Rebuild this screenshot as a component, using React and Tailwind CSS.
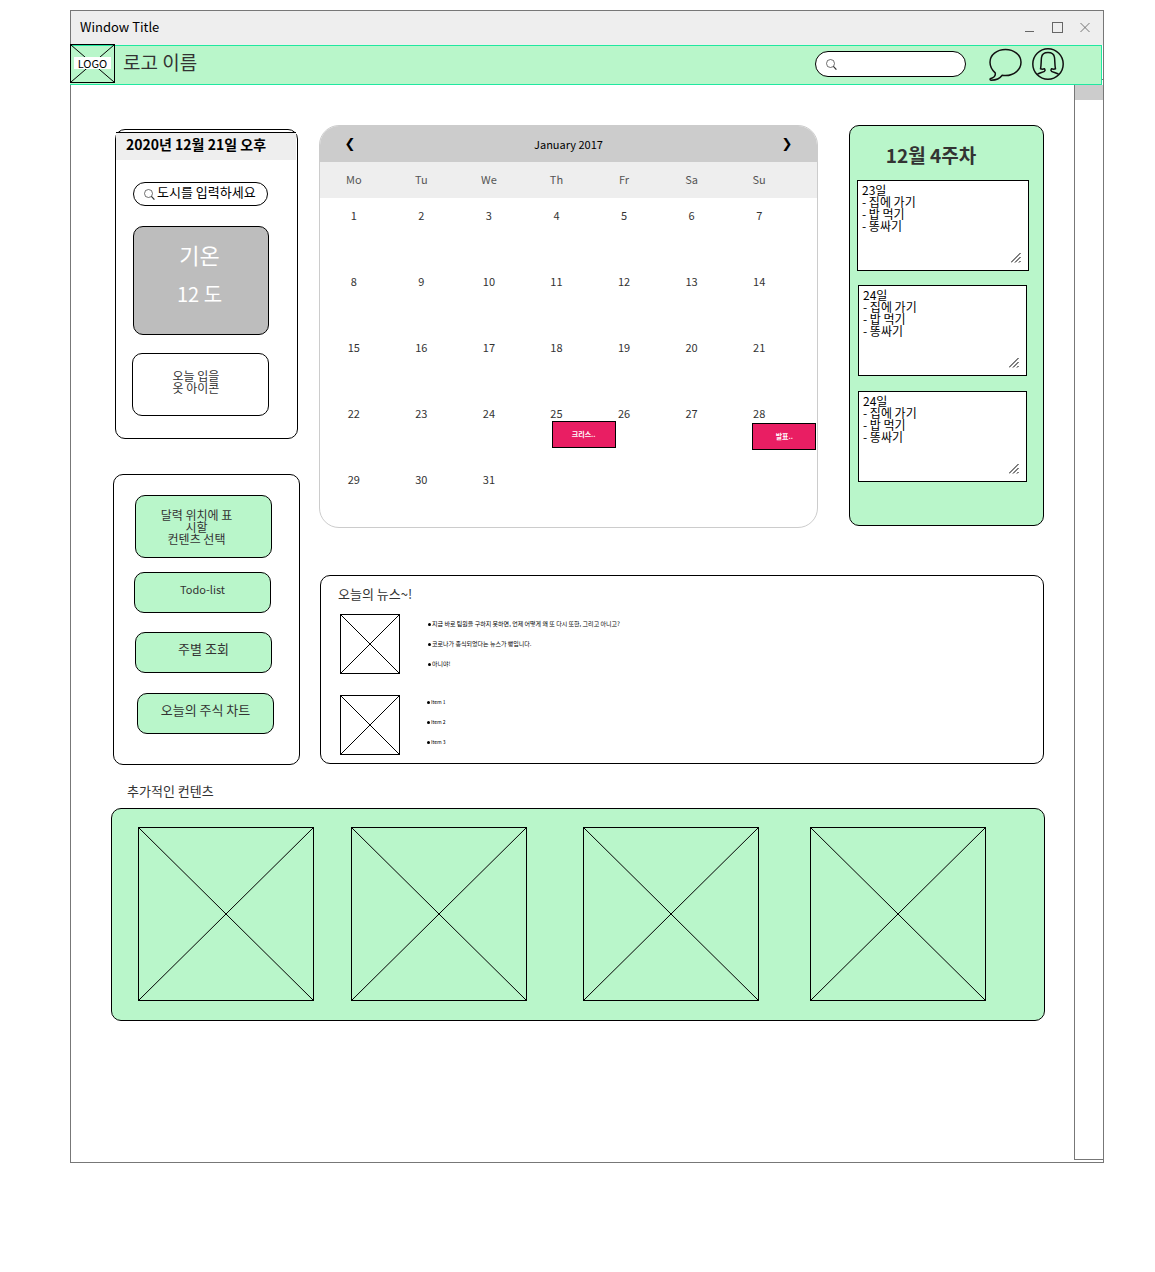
import React from "react";

const weekdays = ["Mo", "Tu", "We", "Th", "Fr", "Sa", "Su"];
const weeks = [0, 1, 2, 3, 4].map((w) =>
  [1, 2, 3, 4, 5, 6, 7].map((d) => (w * 7 + d <= 31 ? w * 7 + d : null))
);
const events = {
  25: { label: "크리스..", place: "left-[29px] top-[25px]" },
  28: { label: "발표..", place: "left-[27px] top-[27px]" },
};
const menu = [
  { text: "달력 위치에 표\n시할\n컨텐츠 선택", box: "ml-[21px] h-[63px] pr-[14px] text-[12px]" },
  { text: "Todo-list", box: "ml-[20px] mt-[14px] h-[41px] pb-2 text-[11px]" },
  { text: "주별 조회", box: "ml-[21px] mt-[19px] h-[41px] pb-2 text-[13px]" },
  { text: "오늘의 주식 차트", box: "ml-[23px] mt-[20px] h-[41px] pb-2 text-[13px]" },
];
const notes = [
  { id: "note-1", day: "23일", box: "ml-[7px] mr-[14px]" },
  { id: "note-2", day: "24일", box: "ml-[8px] mr-[16px] mt-[14px]" },
  { id: "note-3", day: "24일", box: "ml-[8px] mr-[16px] mt-[15px]" },
];
const news = [
  {
    box: "mt-[10px]",
    list: "ml-[28px] text-[6px]",
    items: [
      "지금 바로 팀원을 구하지 못하면, 언제 어떻게 왜 또 다시 또한, 그리고 아니고?",
      "코로나가 종식되었다는 뉴스가 뻥입니다.",
      "아니야!",
    ],
  },
  { box: "mt-[21px]", list: "ml-[27px] -mt-[3px] text-[5px]", items: ["Item 1", "Item 2", "Item 3"] },
];

function Placeholder({ className }) {
  return (
    <div className={"shrink-0 border border-black " + className}>
      <svg className="block h-full w-full" stroke="#000" aria-hidden="true">
        <line x1="0" y1="0" x2="100%" y2="100%" />
        <line x1="100%" y1="0" x2="0" y2="100%" />
      </svg>
    </div>
  );
}

function Magnifier() {
  return (
    <svg className="h-[11px] w-[11px] shrink-0" viewBox="0 0 11 11" fill="none" stroke="#333" aria-hidden="true">
      <circle cx="4.5" cy="4.5" r="4" strokeWidth="0.7" />
      <path d="M7.4 7.4 10.4 10.6" strokeWidth="1.2" />
    </svg>
  );
}

function TitleBar() {
  return (
    <div className="flex h-[34px] items-center justify-between bg-[#eee] pb-[2px] pl-[9px] pr-[13px]">
      <span className="text-[13px] leading-4 text-black">Window Title</span>
      <div className="flex gap-[17px] text-[#666]">
        <button aria-label="Minimize">
          <svg className="block h-[11px] w-[10px]" viewBox="0 0 10 11" stroke="currentColor" shapeRendering="crispEdges">
            <path d="M0 9.5H9" />
          </svg>
        </button>
        <button aria-label="Maximize">
          <svg className="block h-[11px] w-[11px]" viewBox="0 0 11 11" fill="none" stroke="currentColor">
            <rect x=".5" y=".5" width="10" height="10" />
          </svg>
        </button>
        <button aria-label="Close">
          <svg className="block h-[11px] w-[10px]" viewBox="0 0 10 11" stroke="currentColor" strokeWidth=".9">
            <path d="M.5 1 9.5 10M9.5 1 .5 10" />
          </svg>
        </button>
      </div>
    </div>
  );
}

function Header() {
  return (
    <header className="relative z-10 -ml-px mr-px flex h-10 items-center border border-l-0 border-[#20e8a0] bg-[#b9f6ca] pb-[2px] pr-[37px]">
      <div className="relative -mt-px flex h-[39px] w-[45px] shrink-0 items-center justify-center border border-black pb-[2px]">
        <svg className="absolute inset-0 h-full w-full" stroke="#000" aria-hidden="true">
          <line x1="0" y1="0" x2="100%" y2="100%" />
          <line x1="100%" y1="0" x2="0" y2="100%" />
        </svg>
        <span className="relative bg-white px-1 text-[11px] leading-[12px] text-black">LOGO</span>
      </div>
      <h1 className="ml-[8px] -mt-1 text-[19px] leading-6">로고 이름</h1>
      <label className="ml-auto flex h-[26px] w-[151px] items-center rounded-full border border-black bg-white px-[10px]">
        <Magnifier />
        <input type="text" aria-label="검색" className="ml-1 w-full min-w-0 text-[12px] outline-none" />
      </label>
      <button aria-label="메시지" className="ml-[23px]">
        <svg className="block h-[33px] w-[33px]" viewBox="0 0 33 33" fill="none" stroke="#111" strokeWidth="1.5" strokeLinejoin="round">
          <path d="M16.500 1.500C7.800 1.500 1 7 1 14.300c0 4.400 2.300 8 5.200 10.600.6 2.500-1 4.700-5 5.900-.4.8.1 1.300 1 1.400 5.400 0 8.600-1.600 11-4.900 1 .2 2.100.3 3.300.3C25.300 27.600 32 21.500 32 14.300 32 7 25 1.500 16.500 1.500z" />
        </svg>
      </button>
      <button aria-label="프로필" className="ml-[10px]">
        <svg className="block h-[32px] w-[32px]" viewBox="0 0 32 32" fill="none" stroke="#111" strokeWidth="1.5" strokeLinejoin="round">
          <circle cx="16" cy="16" r="15.200" />
          <path d="M5 26.500c2.500-1.800 5.500-2 7.500-3.200.9-.8.600-1.800 0-2.500-1.200.4-2.600.6-4 0C9.400 17 9 13 9.500 9.500 10 6 12.500 4.600 16 4.600S22 6 22.500 9.500C23 13 22.600 17 23.500 20.800c-1.400.6-2.800.4-4 0-.6.7-.9 1.700 0 2.500 2 1.200 5 1.400 7.500 3.200" />
        </svg>
      </button>
    </header>
  );
}

function Weather() {
  return (
    <section className="mx-[2px] h-[310px] rounded-[10px] border border-black pt-[2px]">
      <h2 className="mr-px h-[28px] whitespace-nowrap border-t border-black bg-[#eee] pl-[10px] text-[14px] font-bold leading-[22px] text-black">
        2020년 12월 21일 오후
      </h2>
      <label className="ml-[17px] mr-[29px] mt-[22px] flex h-[24px] items-center rounded-full border border-black pl-[10px] pr-[6px]">
        <Magnifier />
        <input
          type="text"
          aria-label="도시"
          placeholder="도시를 입력하세요"
          className="-mt-[4px] ml-[2px] w-full min-w-0 text-[13px] leading-4 outline-none placeholder:text-black"
        />
      </label>
      <div className="ml-[17px] mr-[28px] mt-[20px] h-[109px] rounded-[10px] border border-black bg-[#bdbdbd] pr-[3px] pt-[7px] text-center leading-[40px] text-white">
        <p className="text-[22px]">기온</p>
        <p className="text-[20px]">12 도</p>
      </div>
      <p className="ml-[16px] mr-[28px] mt-[18px] h-[63px] whitespace-pre rounded-[10px] border border-black pr-[9px] pt-[16px] text-center text-[12px] leading-[12px]">
        {"오늘 입을\n옷 아이콘"}
      </p>
    </section>
  );
}

function Menu() {
  return (
    <nav className="mt-[35px] h-[291px] rounded-[10px] border border-black pt-[20px]">
      {menu.map((m) => (
        <button
          key={m.text}
          className={
            "flex w-[137px] items-center justify-center whitespace-pre rounded-[10px] border border-black bg-[#b9f6ca] leading-[12px] " +
            m.box
          }
        >
          {m.text}
        </button>
      ))}
    </nav>
  );
}

function Calendar() {
  return (
    <section className="h-[403px] min-w-0 flex-1 overflow-hidden rounded-[20px] border border-[#ccc] text-[11px]">
      <div className="flex h-[36px] items-center justify-between bg-[#ccc] px-[24px] pb-px text-black">
        <button aria-label="Previous month" className="w-3 font-['DejaVu_Sans'] text-[13px]">❮</button>
        <span className="leading-4">January 2017</span>
        <button aria-label="Next month" className="w-3 font-['DejaVu_Sans'] text-[13px]">❯</button>
      </div>
      <table className="w-full table-fixed border-collapse text-center leading-[35px]">
        <colgroup>
          {weekdays.map((d) => (
            <col key={d} />
          ))}
          <col className="w-6" />
        </colgroup>
        <thead className="bg-[#eee] text-[#555]">
          <tr className="h-[36px]">
            {weekdays.map((d) => (
              <th key={d} className="p-0 align-top font-normal">{d}</th>
            ))}
            <td />
          </tr>
        </thead>
        <tbody>
          {weeks.map((week, i) => (
            <tr key={i} className="h-[66px]">
              {week.map((day, j) => (
                <td key={j} className="relative p-0 align-top">
                  {day}
                  {events[day] && (
                    <button
                      className={
                        "absolute h-[27px] w-[64px] border border-black bg-[#e91e63] text-[7px] font-bold leading-[25px] text-white " +
                        events[day].place
                      }
                    >
                      {events[day].label}
                    </button>
                  )}
                </td>
              ))}
              <td />
            </tr>
          ))}
        </tbody>
      </table>
    </section>
  );
}

function WeekNotes() {
  return (
    <aside className="h-[401px] w-[195px] shrink-0 rounded-[10px] border border-black bg-[#b9f6ca] pt-[17px]">
      <h2 className="mb-[13px] pr-[31px] text-center text-[19px] font-bold leading-6">12월 4주차</h2>
      {notes.map((n) => (
        <div key={n.id} className={"relative " + n.box}>
          <textarea
            aria-label={n.day}
            id={n.id}
            defaultValue={n.day + "\n- 집에 가기\n- 밥 먹기\n- 똥싸기"}
            className="block h-[91px] w-full resize-none overflow-hidden border border-black bg-white px-1 py-[3px] text-[12px] leading-[12px] text-black outline-none"
          />
          <svg className="pointer-events-none absolute bottom-[8px] right-[8px] h-[10px] w-[10px]" viewBox="0 0 10 10" stroke="#000" aria-hidden="true">
            <path d="M0 9.500 9.500 0M4 9.500 9.500 4M8 9.500 9.500 8" />
          </svg>
        </div>
      ))}
    </aside>
  );
}

function News() {
  return (
    <section className="ml-px mt-[47px] h-[189px] rounded-[10px] border border-black pl-[19px] pt-[8px]">
      <h2 className="-ml-[2px] text-[13px] leading-5">오늘의 뉴스~!</h2>
      {news.map((n, i) => (
        <div key={i} className={"flex h-[60px] " + n.box}>
          <Placeholder className="h-[60px] w-[60px]" />
          <ul className={"leading-[20px] text-black " + n.list}>
            {n.items.map((t) => (
              <li key={t} className="flex items-center gap-px whitespace-nowrap">
                <span className="h-[3px] w-[3px] rounded-full bg-black" />
                {t}
              </li>
            ))}
          </ul>
        </div>
      ))}
    </section>
  );
}

function Extras() {
  return (
    <section>
      <h2 className="mt-[16px] pl-[16px] text-[13px] leading-5">추가적인 컨텐츠</h2>
      <div className="mt-[7px] flex h-[213px] rounded-[10px] border border-black bg-[#b9f6ca] pl-[26px] pt-[18px]">
        <Placeholder className="h-[174px] w-[176px]" />
        <Placeholder className="ml-[37px] h-[174px] w-[176px]" />
        <Placeholder className="ml-[56px] h-[174px] w-[176px]" />
        <Placeholder className="ml-[51px] h-[174px] w-[176px]" />
      </div>
    </section>
  );
}

export default function App() {
  return (
    <div className="bg-white pb-[109px] pl-[70px] pr-[51px] pt-[10px] font-['Noto_Sans_CJK_KR',sans-serif] text-[#333]">
      <div className="border border-[#777]">
        <TitleBar />
        <Header />
        <div className="flex">
          <main className="min-w-0 flex-1 pb-[141px] pl-[40px] pr-[29px] pt-[40px]">
            <div className="flex gap-[19px] pl-[2px] pr-px">
              <div className="w-[187px] shrink-0 pt-[4px]">
                <Weather />
                <Menu />
              </div>
              <div className="min-w-0 flex-1">
                <div className="flex gap-[31px]">
                  <Calendar />
                  <WeekNotes />
                </div>
                <News />
              </div>
            </div>
            <Extras />
          </main>
          <div className="-mt-[6px] mb-[2px] w-[29px] border-y border-l border-[#777] pt-[5px]">
            <div className="h-[15px] bg-[#ccc]" />
          </div>
        </div>
      </div>
    </div>
  );
}
